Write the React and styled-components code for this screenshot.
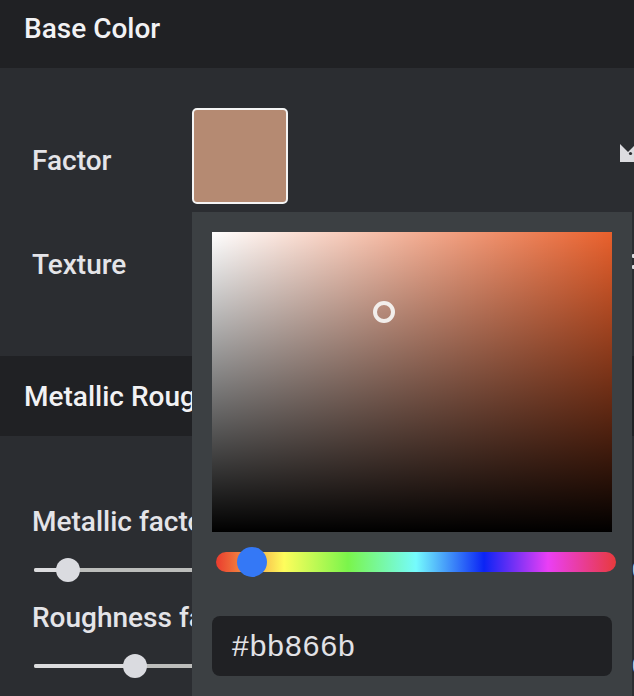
import React from 'react';
import styled, { createGlobalStyle } from 'styled-components';

const GlobalStyle = createGlobalStyle`
  html {
    overflow: hidden;
  }

  body {
    margin: 0;
    padding: 0;
    min-height: 100vh;
    background: #2b2d31;
    font-family: Roboto, 'Liberation Sans', sans-serif;
  }
`;

const Page = styled.div`
  width: 660px;
  margin-top: -12px;
  color: #e4e4e8;
`;

const SectionHeader = styled.div`
  display: flex;
  align-items: center;
  height: 80px;
  padding: 0 24px;
  background: #202124;
  font-size: 28px;
  font-weight: 500;
  color: #f2f2f4;
  white-space: nowrap;
`;

const SectionBody = styled.div`
  padding: ${props => props.padding || '0'};
`;

const Row = styled.div`
  position: relative;
  display: flex;
  align-items: center;
  height: ${props => props.height || 48}px;
  padding-left: 32px;
  margin-top: ${props => props.gap || 0}px;
`;

const Label = styled.div`
  flex-shrink: 0;
  width: 160px;
  padding-top: ${props => props.offset || 0}px;
  font-size: 28px;
  font-weight: 500;
  color: #e4e4e8;
  white-space: nowrap;
`;

const Swatch = styled.div`
  flex-shrink: 0;
  width: 92px;
  height: 92px;
  border: 2px solid #f4f4f4;
  border-radius: 5px;
  background: ${props => props.color};
`;

const Trailing = styled.div`
  display: flex;
  margin-left: auto;
  margin-right: ${props => props.right}px;
  color: #dcdce0;
`;

const FieldLabel = styled.div`
  height: 48px;
  line-height: 48px;
  padding-left: 32px;
  font-size: 28px;
  font-weight: 500;
  color: #e4e4e8;
  white-space: nowrap;
`;

const SliderRow = styled.div`
  display: flex;
  align-items: center;
  height: 48px;
  padding-left: 34px;
`;

const Track = styled.div`
  position: relative;
  flex: 1;
  height: 4px;
  border-radius: 2px;
  background: #bcbdbb;
`;

const TrackFill = styled.div`
  height: 100%;
  border-radius: 2px;
  background: #dcdcde;
`;

const Thumb = styled.div`
  position: absolute;
  top: 50%;
  width: 24px;
  height: 24px;
  margin: -12px 0 0 -12px;
  border-radius: 50%;
  background: #dadbe0;
`;

const ValueText = styled.div`
  width: 28px;
  margin-left: 37px;
  font-size: 20px;
  color: #dcdce0;
`;

const Popover = styled.div`
  position: absolute;
  top: calc(100% + 8px);
  left: 192px;
  z-index: 10;
  width: 400px;
  height: 480px;
  padding: 20px;
  background: #3c4043;
`;

const Saturation = styled.div`
  position: relative;
  width: 400px;
  height: 300px;
  background:
    linear-gradient(to top, #000, rgba(0, 0, 0, 0)),
    linear-gradient(to right, #fff, rgba(255, 255, 255, 0)),
    ${props => props.hue};
`;

const Pointer = styled.div`
  position: absolute;
  width: 14px;
  height: 14px;
  margin: -11px 0 0 -11px;
  border: 4px solid #f2eeeb;
  border-radius: 50%;
`;

const HueBar = styled.div`
  position: relative;
  width: 400px;
  height: 20px;
  margin: 20px 0 0 4px;
  border-radius: 10px;
  background: linear-gradient(
    to right,
    #ea3b2e 0%,
    #fefd5c 17%,
    #7af54b 33%,
    #75fbfd 50%,
    #0b24f5 67%,
    #ea3ff5 83%,
    #e83a3c 100%
  );
`;

const HueThumb = styled.div`
  position: absolute;
  top: -5px;
  width: 30px;
  height: 30px;
  border-radius: 50%;
  background: #3478f6;
`;

const HexInput = styled.div`
  display: flex;
  align-items: center;
  height: 60px;
  margin-top: 44px;
  padding-left: 20px;
  border-radius: 8px;
  background: #202124;
  font-family: 'Liberation Sans', Arial, sans-serif;
  font-size: 30px;
  letter-spacing: 1px;
  color: #e2e2e6;
`;

function ResetIcon() {
  return (
    <svg width="24" height="24" viewBox="0 0 24 24">
      <path d="M0 0 L8 8 L15 1 L22 8 L15 15 L18 18 L0 18 Z" fill="currentColor" />
      <circle cx="10.5" cy="9.5" r="1.6" fill="#2b2d31" />
    </svg>
  );
}

function MoreIcon() {
  return (
    <svg width="8" height="24" viewBox="0 0 8 24">
      <rect x="1" y="2" width="4" height="4" rx="1" fill="currentColor" />
      <rect x="1" y="13" width="4" height="4" rx="1" fill="currentColor" />
    </svg>
  );
}

function Slider({ value }) {
  return (
    <SliderRow>
      <Track>
        <TrackFill style={{ width: `${value * 100}%` }} />
        <Thumb style={{ left: `${value * 100}%` }} />
      </Track>
      <ValueText>0</ValueText>
    </SliderRow>
  );
}

function ColorPicker({ hue, saturation, brightness, hex }) {
  return (
    <Popover>
      <Saturation hue={hue}>
        <Pointer style={{ left: saturation * 400, top: (1 - brightness) * 300 }} />
      </Saturation>
      <HueBar>
        <HueThumb style={{ left: 21 }} />
      </HueBar>
      <HexInput>{hex}</HexInput>
    </Popover>
  );
}

export default function App() {
  return (
    <>
      <GlobalStyle />
      <Page>
        <SectionHeader>Base Color</SectionHeader>
        <SectionBody padding="40px 0 68px">
          <Row height={96}>
            <Label offset={8}>Factor</Label>
            <Swatch color="#b58a72" />
            <Trailing right={16}>
              <ResetIcon />
            </Trailing>
            <ColorPicker hue="#e9602c" saturation={0.43} brightness={0.733} hex="#bb866b" />
          </Row>
          <Row height={48} gap={36}>
            <Label>Texture</Label>
            <Trailing right={21}>
              <MoreIcon />
            </Trailing>
          </Row>
        </SectionBody>
        <SectionHeader>Metallic Roughness</SectionHeader>
        <SectionBody padding="62px 0 0">
          <FieldLabel>Metallic factor</FieldLabel>
          <Slider value={0.06} />
          <FieldLabel>Roughness factor</FieldLabel>
          <Slider value={0.18} />
        </SectionBody>
      </Page>
    </>
  );
}
